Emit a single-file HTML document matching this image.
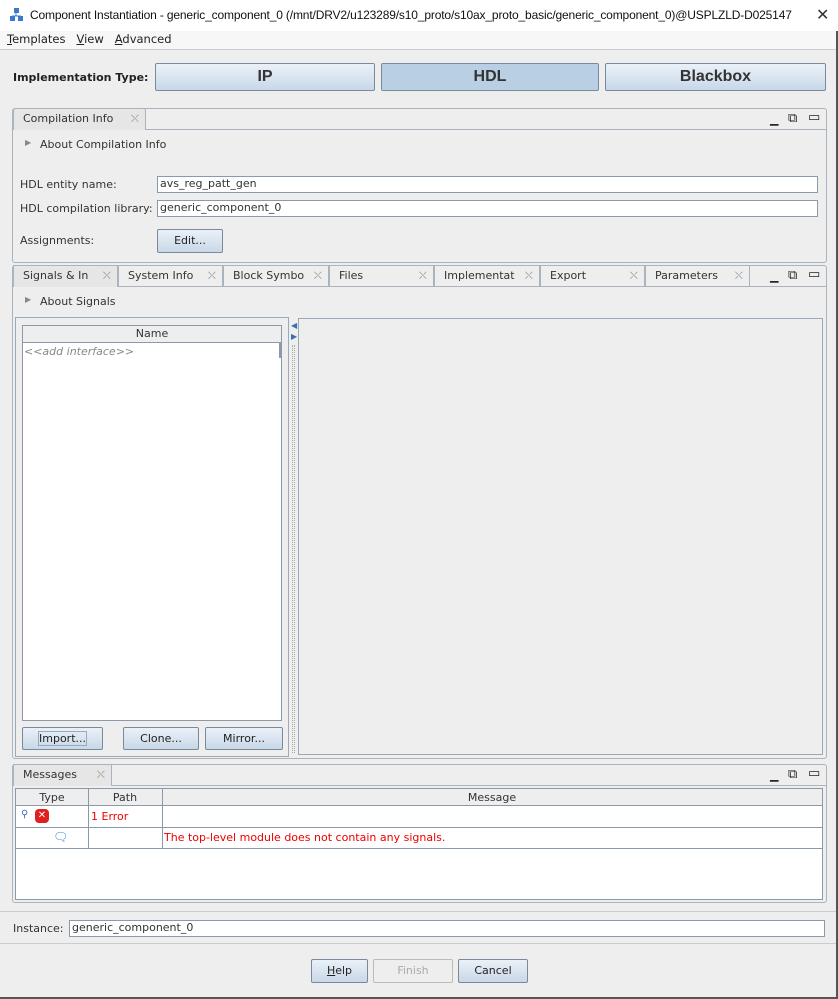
<!DOCTYPE html>
<html><head><meta charset="utf-8"><style>
*{box-sizing:border-box;margin:0;padding:0}
body{width:838px;height:999px;background:#eeeeee;font-family:"DejaVu Sans","Liberation Sans",sans-serif;font-size:11px;color:#333;position:relative;overflow:hidden}
.a{position:absolute;white-space:nowrap}
.btn{position:absolute;border:1px solid #7a8a99;border-radius:2px;background:linear-gradient(#eaf1f8,#c8d8e8);text-align:center;color:#222}
.big{font-family:"Liberation Sans",sans-serif;font-size:16px;font-weight:bold;color:#333;line-height:26px}
.inp{position:absolute;background:#fff;border:1px solid #8a9aaa;padding-left:2px;line-height:14px}
.panel{position:absolute;border:1px solid #a9b4be;border-radius:3px}
.tab{position:absolute;border:1px solid #a9b4be;border-bottom:none;background:#eeeeee;padding-left:9px;line-height:20px;color:#333}
.x{position:absolute;right:6px;top:0;color:#999;font-size:11px}
.ic{position:absolute;font-size:11px;color:#222}
</style></head><body>
<div class="a" style="left:0;top:0;width:838px;height:31px;background:#fff"></div>
<svg class="a" style="left:10px;top:8px" width="14" height="13"><rect x="4" y="0" width="5" height="5" fill="#3a78c9"/><rect x="0" y="8" width="5" height="5" fill="#3a78c9"/><rect x="8" y="8" width="5" height="5" fill="#3a78c9"/><path d="M6 5v3M2 8h9" stroke="#3a78c9"/></svg>
<div class="a" style="left:30px;top:8px;font-family:'Liberation Sans',sans-serif;font-size:12px;letter-spacing:-0.15px;color:#111">Component Instantiation - generic_component_0 (/mnt/DRV2/u123289/s10_proto/s10ax_proto_basic/generic_component_0)@USPLZLD-D025147</div>
<div class="a" style="left:816px;top:5px;font-size:16px;color:#333">✕</div>
<div class="a" style="left:0;top:31px;width:838px;height:19px;background:#f7f7f7;border-bottom:1px solid #ccc"></div>
<div class="a" style="left:7px;top:32px;font-size:11.5px;color:#222"><u>T</u>emplates&nbsp;&nbsp; <u>V</u>iew&nbsp;&nbsp; <u>A</u>dvanced</div>
<div class="a" style="left:836px;top:31px;width:2px;height:968px;background:#555"></div>
<div class="a" style="left:0;top:997px;width:838px;height:2px;background:#555"></div>

<div class="a" style="left:13px;top:71px;font-weight:bold;font-size:11px;color:#222">Implementation Type:</div>
<div class="btn big" style="left:155px;top:63px;width:220px;height:28px">IP</div>
<div class="btn big" style="left:381px;top:63px;width:218px;height:28px;background:#b9cfe4">HDL</div>
<div class="btn big" style="left:605px;top:63px;width:221px;height:28px">Blackbox</div>

<div class="panel" style="left:12px;top:108px;width:815px;height:155px"></div>
<div class="tab" style="left:13px;top:108px;width:133px;height:22px;border-radius:3px 3px 0 0;background:#e6e6e6">Compilation Info<span class="x">⛌</span></div>
<div class="a" style="left:146px;top:129px;width:680px;height:1px;background:#a9b4be"></div>
<div class="ic" style="left:770px;top:113px">▁</div><div class="ic" style="left:788px;top:111px;font-size:13px">⧉</div><div class="ic" style="left:808px;top:110px;font-size:13px">▭</div>
<div class="a" style="left:25px;top:138px;color:#888;font-size:8px">▶</div>
<div class="a" style="left:40px;top:138px">About Compilation Info</div>
<div class="a" style="left:20px;top:178px">HDL entity name:</div>
<div class="inp" style="left:157px;top:176px;width:661px;height:17px">avs_reg_patt_gen</div>
<div class="a" style="left:20px;top:202px">HDL compilation library:</div>
<div class="inp" style="left:157px;top:200px;width:661px;height:17px">generic_component_0</div>
<div class="a" style="left:20px;top:234px">Assignments:</div>
<div class="btn" style="left:157px;top:229px;width:66px;height:24px;line-height:22px">Edit...</div>

<div class="panel" style="left:12px;top:265px;width:815px;height:494px"></div>
<div class="a" style="left:12px;top:286px;width:815px;height:1px;background:#a9b4be"></div>
<div class="tab" style="left:13px;top:265px;width:105px;height:22px;background:#e6e6e6">Signals &amp; In<span class="x">⛌</span></div>
<div class="tab" style="left:118px;top:265px;width:105px;height:21px">System Info<span class="x">⛌</span></div>
<div class="tab" style="left:223px;top:265px;width:106px;height:21px">Block Symbo<span class="x">⛌</span></div>
<div class="tab" style="left:329px;top:265px;width:105px;height:21px">Files<span class="x">⛌</span></div>
<div class="tab" style="left:434px;top:265px;width:106px;height:21px">Implementat<span class="x">⛌</span></div>
<div class="tab" style="left:540px;top:265px;width:105px;height:21px">Export<span class="x">⛌</span></div>
<div class="tab" style="left:645px;top:265px;width:105px;height:21px">Parameters<span class="x">⛌</span></div>
<div class="ic" style="left:770px;top:270px">▁</div><div class="ic" style="left:788px;top:268px;font-size:13px">⧉</div><div class="ic" style="left:808px;top:267px;font-size:13px">▭</div>
<div class="a" style="left:25px;top:295px;color:#888;font-size:8px">▶</div>
<div class="a" style="left:40px;top:295px">About Signals</div>
<div class="a" style="left:15px;top:317px;width:274px;height:440px;border:1px solid #9aaab8"></div>
<div class="a" style="left:22px;top:325px;width:260px;height:396px;background:#fff;border:1px solid #8a9aaa"></div>
<div class="a" style="left:23px;top:326px;width:258px;height:17px;background:#eee;border-bottom:1px solid #8a9aaa;text-align:center;line-height:16px">Name</div>
<div class="a" style="left:279px;top:343px;width:2px;height:15px;background:#8a9aaa"></div>
<div class="a" style="left:24px;top:345px;color:#888;font-style:italic">&lt;&lt;add interface&gt;&gt;</div>
<div class="a" style="left:291px;top:320px;color:#3a6fb0;font-size:8px;line-height:11px">◀<br>▶</div>
<div class="a" style="left:292px;top:345px;width:3px;height:408px;border-left:1px dotted #aaa;border-right:1px dotted #aaa"></div>
<div class="a" style="left:298px;top:318px;width:525px;height:437px;border:1px solid #9aaab8"></div>
<div class="btn" style="left:22px;top:727px;width:81px;height:23px;line-height:21px"><span style="border:1px solid #9ab">Import...</span></div>
<div class="btn" style="left:123px;top:727px;width:76px;height:23px;line-height:21px">Clone...</div>
<div class="btn" style="left:205px;top:727px;width:78px;height:23px;line-height:21px">Mirror...</div>

<div class="panel" style="left:12px;top:764px;width:815px;height:139px"></div>
<div class="tab" style="left:13px;top:764px;width:99px;height:22px;background:#e6e6e6">Messages<span class="x">⛌</span></div>
<div class="a" style="left:112px;top:785px;width:714px;height:1px;background:#a9b4be"></div>
<div class="ic" style="left:770px;top:769px">▁</div><div class="ic" style="left:788px;top:767px;font-size:13px">⧉</div><div class="ic" style="left:808px;top:766px;font-size:13px">▭</div>
<div class="a" style="left:15px;top:788px;width:808px;height:112px;background:#fff;border:1px solid #8a9aaa"></div>
<div class="a" style="left:16px;top:789px;width:806px;height:17px;background:#eee;border-bottom:1px solid #8a9aaa"></div>
<div class="a" style="left:16px;top:791px;width:72px;text-align:center">Type</div>
<div class="a" style="left:88px;top:791px;width:74px;text-align:center">Path</div>
<div class="a" style="left:162px;top:791px;width:660px;text-align:center">Message</div>
<div class="a" style="left:88px;top:789px;width:1px;height:60px;background:#8a9aaa"></div>
<div class="a" style="left:162px;top:789px;width:1px;height:60px;background:#8a9aaa"></div>
<div class="a" style="left:16px;top:827px;width:806px;height:1px;background:#8a9aaa"></div>
<div class="a" style="left:16px;top:848px;width:806px;height:1px;background:#8a9aaa"></div>
<div class="a" style="left:21px;top:809px;color:#3a6fb0;font-size:10px">⚲</div>
<div class="a" style="left:35px;top:809px;width:14px;height:14px;border-radius:4px;background:#e02020;color:#fff;font-weight:bold;font-size:10px;text-align:center;line-height:14px">✕</div>
<div class="a" style="left:91px;top:810px;color:#e00">1 Error</div>
<div class="a" style="left:53px;top:830px;color:#3a8ad0;font-size:12px">🗨</div>
<div class="a" style="left:164px;top:831px;color:#e00">The top-level module does not contain any signals.</div>

<div class="a" style="left:0;top:911px;width:836px;height:1px;background:#ccc"></div>
<div class="a" style="left:13px;top:922px">Instance:</div>
<div class="inp" style="left:69px;top:920px;width:756px;height:17px">generic_component_0</div>
<div class="a" style="left:0;top:943px;width:836px;height:1px;background:#ccc"></div>
<div class="btn" style="left:311px;top:959px;width:57px;height:24px;line-height:22px"><u>H</u>elp</div>
<div class="btn" style="left:373px;top:959px;width:80px;height:24px;line-height:22px;background:#eee;border-color:#bbb;color:#aaa">Finish</div>
<div class="btn" style="left:458px;top:959px;width:70px;height:24px;line-height:22px">Cancel</div>
</body></html>
